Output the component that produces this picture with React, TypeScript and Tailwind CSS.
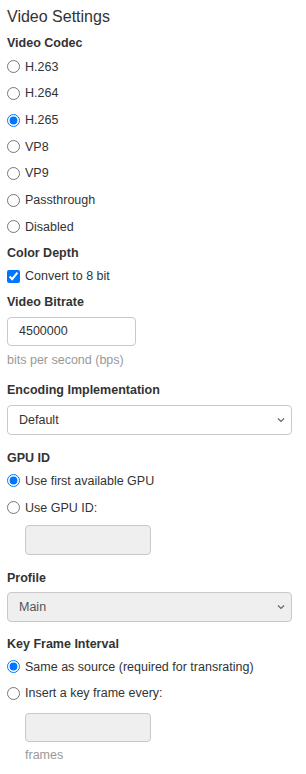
import React from "react"

const codecs = ["H.263", "H.264", "H.265", "VP8", "VP9", "Passthrough", "Disabled"]

const Radio = ({
  name,
  label,
  checked,
  className,
}: {
  name: string
  label: string
  checked?: boolean
  className: string
}) => (
  <label className={`flex items-center gap-[5px] ${className}`}>
    <input type="radio" name={name} defaultChecked={checked} className="m-0 size-[13px]" />
    <span>{label}</span>
  </label>
)

const Chevron = () => (
  <svg
    className="pointer-events-none absolute right-[7px] top-1/2 -translate-y-1/2"
    width="8"
    height="5"
    viewBox="0 0 8 5"
    fill="none"
  >
    <path d="M1 1l3 3 3-3" stroke="#666" strokeWidth="1.2" />
  </svg>
)

const Select = ({ value, disabled }: { value: string; disabled?: boolean }) => (
  <div className="relative w-[285px]">
    <select
      disabled={disabled}
      defaultValue={value}
      className={`h-[30px] w-full appearance-none rounded-[4px] border border-[#c9c9c9] pl-[11px] ${
        disabled ? "bg-[#efefef] text-[#555]" : "bg-white text-[#333]"
      }`}
    >
      <option>{value}</option>
    </select>
    <Chevron />
  </div>
)

export default function App() {
  return (
    <div className="bg-white px-[7px] font-['Liberation_Sans',Arial,sans-serif] text-[12.5px] text-[#333]">
      <div className="flex h-[34px] items-center text-[16px] text-[#333]">Video Settings</div>

      <div className="flex h-[19.67px] items-center font-bold">Video Codec</div>
      {codecs.map((c) => (
        <Radio key={c} name="codec" label={c} checked={c === "H.265"} className="h-[26.67px]" />
      ))}

      <div className="flex h-[25.33px] items-center font-bold">Color Depth</div>
      <label className="flex h-[22px] items-center gap-[5px]">
        <input type="checkbox" defaultChecked className="m-0 size-[13px]" />
        <span>Convert to 8 bit</span>
      </label>

      <div className="flex h-[29.33px] items-center font-bold">Video Bitrate</div>
      <input
        type="text"
        defaultValue="4500000"
        className="block h-[29px] w-[129px] rounded-[4px] border border-[#c9c9c9] bg-white pl-[11px] text-[#333]"
      />
      <div className="flex h-[29px] items-center text-[#999]">bits per second (bps)</div>

      <div className="flex h-[30px] items-center font-bold">Encoding Implementation</div>
      <Select value="Default" />

      <div className="mt-[12px] flex h-[23px] items-center font-bold">GPU ID</div>
      <Radio name="gpu" label="Use first available GPU" checked className="h-[22px]" />
      <Radio name="gpu" label="Use GPU ID:" className="h-[32px]" />
      <div className="pl-[18px]">
        <input
          type="text"
          disabled
          className="mt-px block h-[30px] w-[126px] rounded-[4px] border border-[#c9c9c9] bg-[#efefef]"
        />
      </div>

      <div className="mt-[10px] flex h-[27px] items-center font-bold">Profile</div>
      <Select value="Main" disabled />

      <div className="mt-[10px] flex h-[24px] items-center font-bold">Key Frame Interval</div>
      <Radio name="kf" label="Same as source (required for transrating)" checked className="h-[22px]" />
      <Radio name="kf" label="Insert a key frame every:" className="h-[31px]" />
      <div className="pl-[18px]">
        <input
          type="text"
          disabled
          className="mt-[4px] block h-[29px] w-[126px] rounded-[4px] border border-[#c9c9c9] bg-[#efefef]"
        />
      </div>
      <div className="flex h-[27px] items-center pl-[18px] text-[#999]">frames</div>
    </div>
  )
}
